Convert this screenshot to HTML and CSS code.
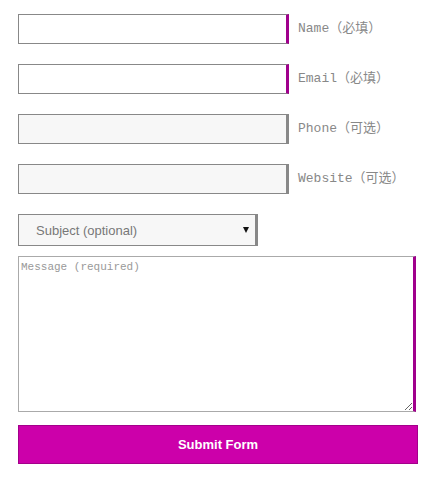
FILE: index.html
```html
<!DOCTYPE html>
<html lang="zh">
<head>
    <meta charset="UTF-8">
    <meta name="viewport" content="width=device-width, initial-scale=1.0">
    <title>Contact Form</title>
    <link rel="stylesheet" href="styles.css">
</head>
<body>
    <form class="contact-form">
        <div class="form-row">
            <input type="text" class="field required" id="name">
            <label for="name">Name（必填）</label>
        </div>
        <div class="form-row">
            <input type="text" class="field required" id="email">
            <label for="email">Email（必填）</label>
        </div>
        <div class="form-row">
            <input type="text" class="field optional" id="phone">
            <label for="phone">Phone（可选）</label>
        </div>
        <div class="form-row">
            <input type="text" class="field optional" id="website">
            <label for="website">Website（可选）</label>
        </div>
        <div class="select-wrap">
            <select id="subject">
                <option>Subject (optional)</option>
            </select>
        </div>
        <textarea id="message" placeholder="Message (required)"></textarea>
        <button type="submit">Submit Form</button>
    </form>
</body>
</html>
```

FILE: styles.css
```css
body {
    margin: 8px;
    background: #fff;
}
.contact-form {
    width: 400px;
    padding: 6px 0 0 10px;
}
.form-row {
    display: flex;
    align-items: center;
    height: 30px;
    margin-bottom: 20px;
}
.field {
    box-sizing: border-box;
    width: 271px;
    height: 30px;
    margin: 0;
    padding: 0 6px;
    border: 1px solid #888;
    border-right: 3px solid #888;
    border-radius: 0;
    outline: none;
}
.required {
    background: #fff;
    border-right-color: #a0008c;
}
.optional {
    background: #f7f7f7;
}
.form-row label {
    margin: 0 0 5px 9px;
    font-family: "Liberation Mono", "Noto Sans CJK SC", monospace;
    font-size: 13px;
    color: #888;
}
.select-wrap {
    position: relative;
    width: 240px;
    height: 32px;
}
.select-wrap::after {
    content: "";
    position: absolute;
    right: 9px;
    top: 13px;
    border-left: 3px solid transparent;
    border-right: 3px solid transparent;
    border-top: 6px solid #111;
    pointer-events: none;
}
select {
    box-sizing: border-box;
    width: 240px;
    height: 32px;
    margin: 0;
    padding: 0 0 0 17px;
    appearance: none;
    -webkit-appearance: none;
    background: #f7f7f7;
    border: 1px solid #888;
    border-right: 3px solid #888;
    border-radius: 0;
    font-family: "Liberation Sans", Arial, sans-serif;
    font-size: 13px;
    color: #777;
}
textarea {
    display: block;
    box-sizing: border-box;
    width: 398px;
    height: 156px;
    margin: 10px 0 0;
    padding: 4px 2px;
    border: 1px solid #aaa;
    border-right: 3px solid #a0008c;
    border-radius: 0;
    font-family: "Liberation Mono", monospace;
    font-size: 11px;
    outline: none;
}
textarea::placeholder {
    color: #999;
}
button {
    display: block;
    box-sizing: border-box;
    width: 400px;
    height: 39px;
    margin-top: 13px;
    background-color: #cc00aa;
    color: #fff;
    border: 1px solid #a3008a;
    border-radius: 0;
    font-family: "Liberation Sans", Arial, sans-serif;
    font-size: 13px;
    font-weight: bold;
    cursor: pointer;
}
```
